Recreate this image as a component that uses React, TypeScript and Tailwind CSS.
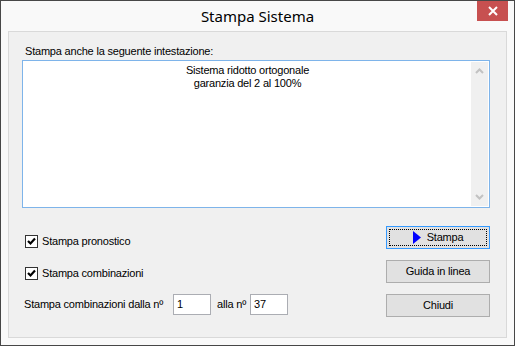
import React from "react";

const sys = { fontFamily: '"Liberation Sans", Arial, sans-serif' };

function Check() {
  return (
    <div className="w-[13px] h-[13px] border border-[#333333] bg-white flex items-center justify-center">
      <svg width="9" height="9" viewBox="0 0 9 9">
        <path d="M1 4 L3.5 6.5 L8 1.5" fill="none" stroke="#000" strokeWidth="2.2" />
      </svg>
    </div>
  );
}

function Btn({ children, focus }: { children: React.ReactNode; focus?: boolean }) {
  return (
    <div
      className={`w-[104px] h-[23px] flex items-center justify-center bg-[#e1e1e1] border ${
        focus ? "border-[#3399ff]" : "border-[#adadad]"
      } p-[2px]`}
    >
      <div
        className={`w-full h-full flex items-center justify-center gap-[6px] ${
          focus ? "border border-dotted border-black" : ""
        }`}
      >
        {children}
      </div>
    </div>
  );
}

export default function App() {
  return (
    <div
      className="w-[515px] h-[346px] border border-[#474747] bg-[#f9f9f9] flex flex-col text-black"
      style={sys}
    >
      <div className="h-[30px] relative flex items-center justify-center shrink-0">
        <span className="text-[15px] text-[#000]" style={{ fontFamily: '"Noto Sans", "Open Sans", sans-serif' }}>
          Stampa Sistema
        </span>
        <div className="absolute right-[6px] top-0 w-[31px] h-[20px] bg-[#c75050] flex items-center justify-center">
          <svg width="10" height="10" viewBox="0 0 10 10">
            <path d="M1 1 L9 9 M9 1 L1 9" stroke="#fff" strokeWidth="2" />
          </svg>
        </div>
      </div>
      <div className="flex-1 px-[7px] pb-[7px] flex">
        <div className="flex-1 border border-[#d9d9d9] bg-[#f0f0f0] flex flex-col text-[11px] tracking-[-0.2px] pl-[13px] pr-[16px]">
          <div className="mt-[13px] leading-[13px] ml-[3px]">Stampa anche la seguente intestazione:</div>
          <div className="mt-[2px] h-[148px] border border-[#7eb4ea] bg-white p-[1px] flex">
            <div className="flex-1 text-center leading-[13px] pt-[2px]">
              <div>Sistema ridotto ortogonale</div>
              <div>garanzia del 2 al 100%</div>
            </div>
            <div className="w-[17px] bg-[#f0f0f0] flex flex-col justify-between items-center py-[6px]">
              <svg width="9" height="6" viewBox="0 0 9 6">
                <path d="M1 5 L4.5 1.5 L8 5" fill="none" stroke="#c2c2c2" strokeWidth="2" />
              </svg>
              <svg width="9" height="6" viewBox="0 0 9 6">
                <path d="M1 1 L4.5 4.5 L8 1" fill="none" stroke="#c2c2c2" strokeWidth="2" />
              </svg>
            </div>
          </div>
          <div className="flex mt-[18px]">
            <div className="flex-1 flex flex-col pl-[3px] pt-[4px]">
              <div className="flex items-center gap-[4px] h-[23px]">
                <Check />
                <span>Stampa pronostico</span>
              </div>
              <div className="flex items-center gap-[4px] h-[23px] mt-[9px]">
                <Check />
                <span>Stampa combinazioni</span>
              </div>
              <div className="flex items-center h-[23px] mt-[8px] -ml-[1px]">
                <span>Stampa combinazioni dalla nº</span>
                <div className="ml-[10px] w-[38px] h-[21px] border border-[#abadb3] bg-white px-[3px] flex items-center">1</div>
                <span className="ml-[6px]">alla nº</span>
                <div className="ml-[4px] w-[38px] h-[21px] border border-[#abadb3] bg-white px-[3px] flex items-center">37</div>
              </div>
            </div>
            <div className="flex flex-col gap-[11px]">
              <Btn focus>
                <svg width="8" height="13" viewBox="0 0 8 13">
                  <path d="M0 0 L8 6.5 L0 13 Z" fill="#0000ff" />
                </svg>
                <span>Stampa</span>
              </Btn>
              <Btn>Guida in linea</Btn>
              <Btn>Chiudi</Btn>
            </div>
          </div>
        </div>
      </div>
    </div>
  );
}
